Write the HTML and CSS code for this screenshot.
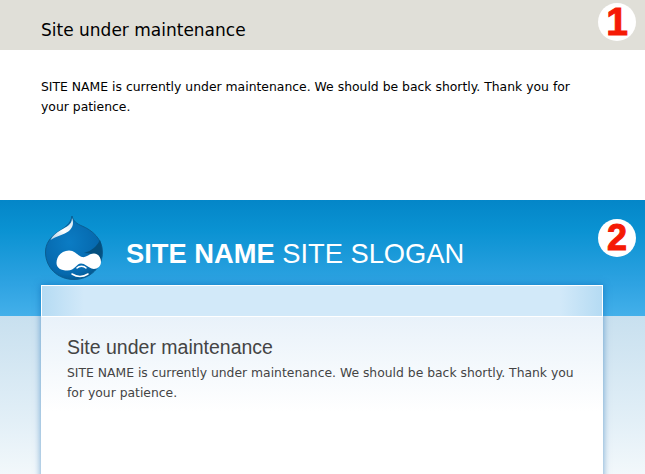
FILE: index.html
```html
<!DOCTYPE html>
<html lang="en">
<head>
<meta charset="utf-8">
<title>Site under maintenance</title>
<link rel="stylesheet" href="styles.css">
</head>
<body>
<section class="plain">
  <header class="plain-head"><h1 class="plain-title">Site under maintenance</h1></header>
  <p class="plain-text">SITE NAME is currently under maintenance. We should be back shortly. Thank you for your patience.</p>
  <span class="badge badge-one">1</span>
</section>
<section class="themed">
  <div class="brand">
    <svg class="logo" width="60" height="66" viewBox="0 0 60 66" aria-hidden="true">
      <defs>
        <radialGradient id="drop" cx="0.42" cy="0.42" r="0.62">
          <stop offset="0" stop-color="#0b7cc4"/>
          <stop offset="0.8" stop-color="#0669ae"/>
          <stop offset="1" stop-color="#045a92"/>
        </radialGradient>
        <linearGradient id="shine" x1="1" y1="0" x2="0" y2="1">
          <stop offset="0" stop-color="#cfe3f0"/>
          <stop offset="0.5" stop-color="#ffffff"/>
          <stop offset="1" stop-color="#a9cde6"/>
        </linearGradient>
      </defs>
      <path d="M28 1C27 9 20 13 14 17C6 22 1.5 29 1.5 37C1.5 53 14 64.500 30 64.500C46 64.500 58.500 52 58.500 37C58.500 24 48 15 38 11C33 9 29 6 28 1Z" fill="url(#drop)" stroke="#0b5e92" stroke-width="1"/>
      <path d="M28 3C28 10 22 12 17 15C12 18 8 21 6.500 25C12 21 20 20 25 16C29 12 30 8 28 3Z" fill="url(#shine)"/>
      <path d="M56 25C58 30 58.500 38 57 44C52 40 47 38 40 38C48 36 53 31 56 25Z" fill="#04507f"/>
      <path d="M12.500 48C12.500 41 18 35.500 25 35.500C31 35.500 34 41 38 42C42 43 45 38.500 50 38.500C54.500 38.500 57 43 57 47C57 52 52 55 47.500 53.500C43.500 52 41 48.500 37 48.500C32.500 48.500 31 55.500 23.500 55.500C17 55.500 12.500 53 12.500 48Z" fill="#fff"/>
      <path d="M33 53C35 50.500 40 50.500 42 53M28 59C33 62 39 62 44 59" fill="none" stroke="#fff" stroke-width="1.500" stroke-linecap="round"/>
    </svg>
    <p class="site-name"><strong>SITE NAME</strong> SITE SLOGAN</p>
  </div>
  <main class="card">
    <div class="card-top"></div>
    <div class="card-body">
      <h2 class="card-title">Site under maintenance</h2>
      <p class="card-text">SITE NAME is currently under maintenance. We should be back shortly. Thank you for your patience.</p>
    </div>
  </main>
  <span class="badge badge-two">2</span>
</section>
</body>
</html>
```
FILE: styles.css
```css
* { box-sizing: border-box; }
html, body { margin: 0; height: 100%; overflow: hidden; background: #fff; }
body { width: 645px; height: 474px; }

.plain { position: relative; height: 200px; background: #fff; }
.plain-head { height: 50px; background: #e0dfd8; padding: 19px 41px 0; }
.plain-title { margin: 0; font: 400 17px/22px "DejaVu Sans", sans-serif; color: #000; }
.plain-text { margin: 0; padding: 27px 70px 0 41px; font: 400 12.4px/20px "DejaVu Sans", sans-serif; color: #000; }

.badge {
  position: absolute; width: 38px; height: 38px; border-radius: 50%;
  background: #fff; color: #f51a05; text-align: center;
  font: 700 39px/38px "Liberation Sans", sans-serif;
  -webkit-text-stroke: 1px #f51a05;
}
.badge-one { left: 598px; top: 3px; }
.badge-two { left: 598px; top: 19px; font-size: 36px; }

.themed {
  position: relative; height: 274px; overflow: hidden;
  background: linear-gradient(to bottom, #c8e0ef 116px, #e2eff7 220px, #f2f8fb 274px);
}
.brand {
  height: 116px; padding: 15px 0 0 44px; display: flex; align-items: flex-start;
  background: linear-gradient(to bottom, #0486c8 0, #0a92d2 30px, #2fa3e2 85px, #43b0ea 116px);
}
.logo { flex: none; display: block; }
.site-name {
  margin: 23px 0 0 22px; color: #fff; white-space: nowrap;
  font: 400 27.3px/32px "Liberation Sans", sans-serif;
}
.site-name strong { font-weight: 700; }

.card {
  position: absolute; left: 41px; top: 85px; width: 562px; height: 240px;
  background: #fff; box-shadow: 0 0 7px rgba(0, 90, 170, .55);
}
.card-top {
  height: 32px; border: 1px solid #fff;
  background:
    linear-gradient(to right, #b5dbf3, rgba(181, 219, 243, 0)) left / 42px 100% no-repeat,
    linear-gradient(to left, #b5dbf3, rgba(181, 219, 243, 0)) right / 42px 100% no-repeat,
    #d2e9f9;
}
.card-body {
  height: 208px; padding: 19px 26px 0;
  background: linear-gradient(to bottom, #e9f2fa 0, #f3f8fc 45px, #fff 95px);
}
.card-title { margin: 0 0 5px; font: 400 19.5px/22px "Liberation Sans", sans-serif; color: #444; }
.card-text { margin: 0; font: 400 12.37px/20px "DejaVu Sans", sans-serif; color: #444; }
```
